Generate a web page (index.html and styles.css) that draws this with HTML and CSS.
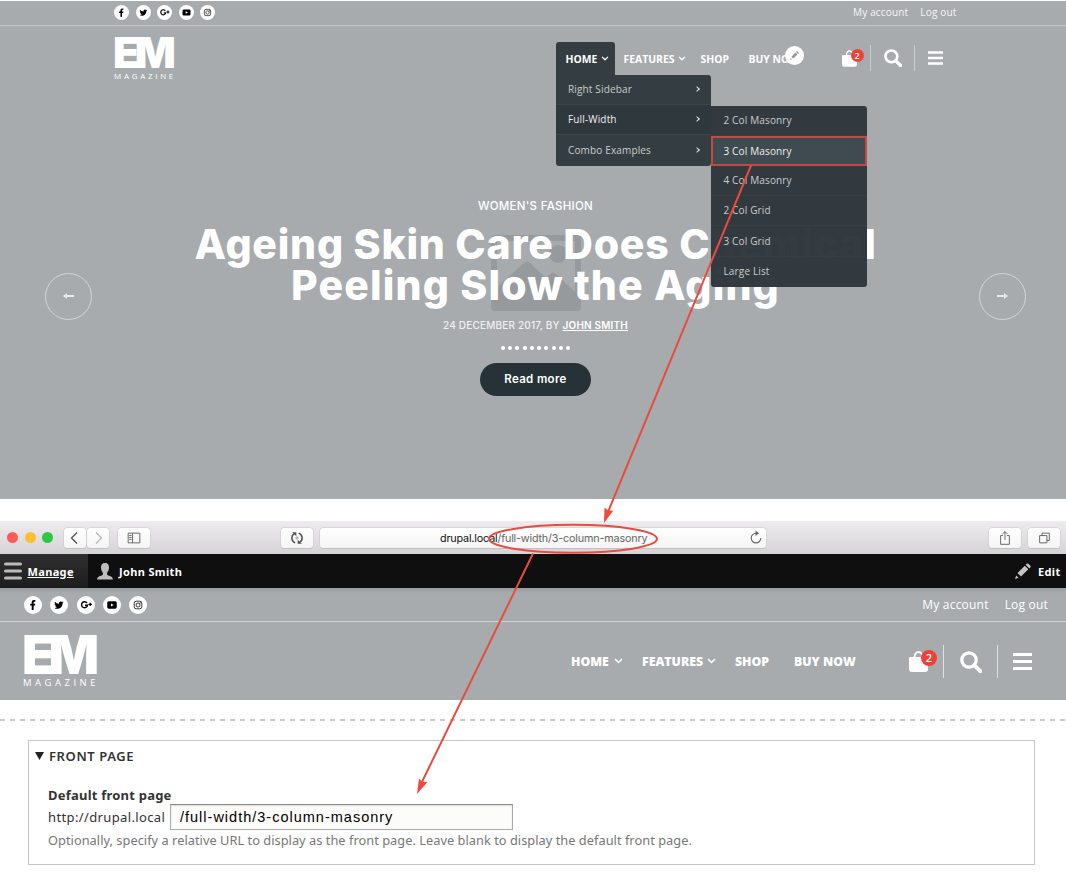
FILE: index.html
```html
<!DOCTYPE html>
<html lang="en">
<head>
<meta charset="utf-8">
<title>EM Magazine</title>
<link rel="stylesheet" href="styles.css">
</head>
<body>
<svg class="defs" aria-hidden="true">
  <symbol id="fb" viewBox="0 0 18 18"><path d="M7.7 14V9.6H6.2V7.8h1.5V6.5C7.700 4.900 8.600 4.100 10 4.100h1.300v1.700h-.9c-.6 0-.8.3-.8.8v1.200h1.700l-.3 1.800H9.600V14z"/></symbol>
  <symbol id="tw" viewBox="0 0 18 18"><path d="M13.500 6.200c-.3.200-.7.300-1 .3.400-.2.600-.5.800-.9-.4.200-.8.400-1.200.4a1.900 1.900 0 0 0-3.200 1.700C7.300 7.600 6 6.900 5 5.700c-.5.900-.3 2 .6 2.500-.3 0-.6-.1-.9-.2 0 .9.700 1.700 1.500 1.900-.3.100-.6.100-.8 0 .2.700.9 1.300 1.700 1.300-.8.600-1.800.9-2.800.8 3.700 2.200 8.200-.2 8.200-4.600.4-.4.800-.7 1-1.200z"/></symbol>
  <symbol id="gp" viewBox="0 0 18 18"><path d="M10 7a3 3 0 1 0 .5 2.300H8" fill="none" stroke="#000" stroke-width="1.400"/><path d="M11.500 8.400h3.400M13.200 6.700v3.400" stroke="#000" stroke-width="1.300"/></symbol>
  <symbol id="yt" viewBox="0 0 18 18"><path fill-rule="evenodd" d="M5.800 5.300h6.400q1.600 0 1.600 1.600v4.200q0 1.600-1.600 1.600H5.800q-1.600 0-1.600-1.600V6.900q0-1.600 1.600-1.600zM8 7.500v3l2.700-1.500z"/></symbol>
  <symbol id="ig" viewBox="0 0 18 18"><g fill="none" stroke="#222" stroke-width=".9"><rect x="5.200" y="5.200" width="7.600" height="7.600" rx="2"/><circle cx="9" cy="9" r="2"/></g><circle cx="11.200" cy="6.800" r=".6"/></symbol>
  <symbol id="chev" viewBox="0 0 9 6"><path d="M1 1l3.500 3.500L8 1" fill="none" stroke="currentColor" stroke-width="1.500"/></symbol>
  <symbol id="bag" viewBox="0 0 19 21"><path d="M0 7q0-1 1-1h3.500C5 2 7 0 9.500 0S14 2 14.500 6H18q1 0 1 1v11q0 3-3 3H3q-3 0-3-3zM6.500 6h6C12.300 3.500 11.300 2 9.500 2S6.700 3.500 6.500 6z" fill="#fff" fill-rule="evenodd"/></symbol>
  <symbol id="search" viewBox="0 0 22 22"><circle cx="9" cy="9" r="7.200" fill="none" stroke="#fff" stroke-width="3.200"/><path d="M14.200 14.200l6 6" stroke="#fff" stroke-width="4" stroke-linecap="round"/></symbol>
  <symbol id="burger" viewBox="0 0 19 17"><path d="M0 1.500h19M0 8.500h19M0 15.500h19" stroke="#fff" stroke-width="3"/></symbol>
  <symbol id="pencil" viewBox="0 0 16 16"><path d="M2.500 10l7.300-7.300 3.500 3.500L6 13.500zM10.700 1.800l1-1q.8-.8 1.600 0l2 2q.8.800 0 1.600l-1 1zM0 16l1.200-3.500 2.300 2.300z"/></symbol>
  <symbol id="arrow" viewBox="0 0 11 6"><path d="M3.500 3H11" stroke="#e9eaeb" stroke-width="2"/><path d="M0 3L4 0v6z" fill="#e9eaeb"/></symbol>
</svg>

<section class="hero-site">
  <div class="topbar topbar-sm">
    <div class="social">
      <span><svg><use href="#fb"/></svg></span><span><svg><use href="#tw"/></svg></span><span><svg><use href="#gp"/></svg></span><span><svg><use href="#yt"/></svg></span><span><svg><use href="#ig"/></svg></span>
    </div>
    <div class="account"><a>My account</a><a>Log out</a></div>
  </div>
  <header class="header header-sm">
    <div class="logo"><b>EM</b><i>MAGAZINE</i></div>
    <nav class="nav">
      <div class="item home">
        <span class="label">HOME</span><svg class="chev"><use href="#chev"/></svg>
        <ul class="menu">
          <li><span>Right Sidebar</span><em></em></li>
          <li class="open"><span>Full-Width</span><em></em>
            <ul class="menu submenu">
              <li><span>2 Col Masonry</span></li>
              <li class="picked"><span>3 Col Masonry</span></li>
              <li><span>4 Col Masonry</span></li>
              <li><span>2 Col Grid</span></li>
              <li><span>3 Col Grid</span></li>
              <li><span>Large List</span></li>
            </ul>
          </li>
          <li><span>Combo Examples</span><em></em></li>
        </ul>
      </div>
      <div class="item features"><span class="label">FEATURES</span><svg class="chev"><use href="#chev"/></svg></div>
      <div class="item shop"><span class="label">SHOP</span></div>
      <div class="item buy"><span class="label">BUY NOW</span><span class="edit-dot"><svg><use href="#pencil"/></svg></span></div>
    </nav>
    <div class="tools">
      <div class="cart"><svg><use href="#bag"/></svg><span class="count">2</span></div>
      <div class="find"><svg><use href="#search"/></svg></div>
      <div class="more"><svg><use href="#burger"/></svg></div>
    </div>
  </header>
  <div class="slide">
    <div class="round"><svg><use href="#arrow"/></svg></div>
    <div class="story">
      <svg class="placeholder" viewBox="0 0 90 76"><path fill="#979a9c" fill-rule="evenodd" d="M4 0h82q4 0 4 4v68q0 4-4 4H4q-4 0-4-4V4q0-4 4-4zM6 6v46l27-24q3-3 6 0l16 15 4-4q3-3 6 0l19 18V6z"/><circle cx="67" cy="19" r="9" fill="#979a9c"/></svg>
      <div class="kicker">WOMEN'S FASHION</div>
      <h1><span class="l1">Ageing Skin Care Does Chemical</span><span class="l2">Peeling Slow the Aging</span></h1>
      <div class="byline"><span>24 DECEMBER 2017, BY <u>JOHN SMITH</u></span></div>
      <div class="dots"><s></s><s></s><s></s><s></s><s></s><s></s><s></s><s></s><s></s><s></s></div>
      <div class="read">Read more</div>
    </div>
    <div class="round next"><svg><use href="#arrow"/></svg></div>
  </div>
</section>

<div class="browser">
  <div class="lights"><s class="red"></s><s class="amber"></s><s class="green"></s></div>
  <div class="btn back"><svg viewBox="0 0 22 20"><path d="M13 4.500L7.500 10l5.500 5.500" stroke="#555" stroke-width="1.400"/></svg></div>
  <div class="btn fwd"><svg viewBox="0 0 22 20"><path d="M9 4.500l5.500 5.500L9 15.500" stroke="#b5b5b5" stroke-width="1.300"/></svg></div>
  <div class="btn side"><svg viewBox="0 0 33 20"><path d="M10.500 5h12v10h-12zM15 5v10M11.500 7.500H14M11.500 9.500H14M11.500 11.500H14" stroke="#666"/></svg></div>
  <div class="btn sync"><svg viewBox="0 0 33 20"><path d="M14.600 15a5.400 5.400 0 0 1-.8-9.600M18.400 5a5.400 5.400 0 0 1 .8 9.600" stroke="#555" stroke-width="1.600"/><path d="M11.500 4h4.300v4.300zM21.500 16h-4.300v-4.300z" fill="#555"/><circle cx="16.500" cy="10" r="1.200" stroke="#888" stroke-width=".8"/></svg></div>
  <div class="btn url"><span>drupal.local<i>/full-width/3-column-masonry</i></span><svg viewBox="0 0 20 20"><path d="M10 5.300a4.800 4.800 0 1 0 4.800 4.800" stroke="#666" stroke-width="1.100"/><path d="M9.500 2.500v5.600L13 5.300z" fill="#666"/></svg></div>
  <div class="btn share"><svg viewBox="0 0 33 20"><path d="M14.500 7.500H12v9h9v-9h-2.500M16.500 12V3.500M13.800 6l2.700-2.700L19.200 6" stroke="#666"/></svg></div>
  <div class="btn tabs"><svg viewBox="0 0 33 20"><path d="M12 7.500h7.500v7.500H12zM14.500 7.500V5H22v7.500h-2.500" stroke="#666"/></svg></div>
</div>

<div class="adminbar">
  <div class="manage"><svg viewBox="0 0 18 18"><path d="M1.500 2h15M1.500 9h15M1.500 16h15" stroke="#bbb" stroke-width="3" stroke-linecap="round"/></svg><span>Manage</span></div>
  <div class="user"><svg viewBox="0 0 16 17"><path fill="#bebebe" d="M8 0c3 0 4 2 4 4.500S11 8 10.300 9.500c-.6 1.500-.3 2.500 1 3 2 .7 4.200 1 4.700 4H0c.5-3 2.700-3.300 4.700-4 1.300-.5 1.600-1.500 1-3C5 8 4 7 4 4.500S5 0 8 0z"/></svg><span>John Smith</span></div>
  <div class="edit"><svg><use href="#pencil"/></svg><span>Edit</span></div>
</div>

<section class="site-two">
  <div class="topbar topbar-lg">
    <div class="social">
      <span><svg><use href="#fb"/></svg></span><span><svg><use href="#tw"/></svg></span><span><svg><use href="#gp"/></svg></span><span><svg><use href="#yt"/></svg></span><span><svg><use href="#ig"/></svg></span>
    </div>
    <div class="account"><a>My account</a><a>Log out</a></div>
  </div>
  <header class="header header-lg">
    <div class="logo"><b>EM</b><i>MAGAZINE</i></div>
    <nav class="nav">
      <div class="item home"><span class="label">HOME</span><svg class="chev"><use href="#chev"/></svg></div>
      <div class="item features"><span class="label">FEATURES</span><svg class="chev"><use href="#chev"/></svg></div>
      <div class="item shop"><span class="label">SHOP</span></div>
      <div class="item buy"><span class="label">BUY NOW</span></div>
    </nav>
    <div class="tools">
      <div class="cart"><svg><use href="#bag"/></svg><span class="count">2</span></div>
      <div class="find"><svg><use href="#search"/></svg></div>
      <div class="more"><svg><use href="#burger"/></svg></div>
    </div>
  </header>
</section>

<div class="divider"></div>

<section class="settings">
  <h2><svg viewBox="0 0 9 8"><path d="M0 0h9L4.500 8z" fill="#222"/></svg><span>FRONT PAGE</span></h2>
  <div class="field-name"><span>Default front page</span></div>
  <div class="field"><span class="base">http://drupal.local</span><div class="input"><span>/full-width/3-column-masonry</span></div></div>
  <p class="help"><span>Optionally, specify a relative URL to display as the front page. Leave blank to display the default front page.</span></p>
</section>

<svg class="notes" viewBox="0 0 1066 887">
  <g fill="none" stroke="#e74c3f" stroke-width="2">
    <path d="M751 165.500L608 512M533 553.500L421 784"/>
    <ellipse cx="573" cy="538.800" rx="84" ry="14"/>
  </g>
  <path fill="#ef4a3c" d="M604 523l.5-15.500 3.700 3 5 .2zM417 794l2-15.500 3 3.200 5.500.3z"/>
</svg>
</body>
</html>
```
FILE: styles.css
```css
* { box-sizing: border-box; }
body { margin: 0; width: 1066px; height: 887px; position: relative; overflow: hidden; background: #fff; font-family: "Open Sans", sans-serif; }
.defs { position: absolute; width: 0; height: 0; }
ul { list-style: none; margin: 0; padding: 0; }
svg { display: block; flex: none; }
span, a { white-space: nowrap; }
s { text-decoration: none; display: block; border-radius: 50%; }

.hero-site { height: 499px; border-top: 1px solid #fff; background: #a7abad; }
.topbar { display: flex; justify-content: space-between; align-items: center; border-bottom: 1px solid #c3c6c7; color: #fff; }
.topbar-sm { height: 25px; padding: 0 109.500px 1px 114px; }
.topbar-lg { height: 34px; padding: 0 18px 0 24px; border-color: #cfd1d2; }
.social { display: flex; }
.social span { background: #fff; border-radius: 50%; }
.social svg { width: 100%; height: 100%; }
.topbar-sm .social { gap: 6.600px; }
.topbar-sm .social span { width: 15px; height: 15px; }
.topbar-lg .social { gap: 8.300px; }
.topbar-lg .social span { width: 18px; height: 18px; }
.account { display: flex; }
.topbar-sm .account { font-size: 10px; line-height: 14px; gap: 12px; letter-spacing: .17px; opacity: .9; padding-bottom: 1px; }
.topbar-lg .account { font-size: 12px; gap: 16px; letter-spacing: .2px; }

.header { display: flex; color: #fff; }
.logo { flex: none; display: flex; flex-direction: column; }
.logo b { font: 900 43px/32px Inter, sans-serif; letter-spacing: -4.500px; }
.logo i { font: normal 8px/8px "Open Sans", sans-serif; letter-spacing: 2.700px; }
.header-sm { height: 69px; }
.header-sm .logo { width: 555.500px; padding: 10px 0 0 113px; }
.header-sm .logo i { margin-top: 4px; padding-left: 1px; }
.header-lg { height: 78px; }
.header-lg .logo { width: 571px; padding: 14px 0 0 22px; }
.header-lg .logo b { font-size: 53px; line-height: 39px; letter-spacing: -6px; }
.header-lg .logo i { font-size: 9.500px; line-height: 9px; letter-spacing: 3.500px; margin-top: 3px; padding-left: 1px; }

.nav { display: flex; font-weight: 700; }
.item { position: relative; display: flex; align-items: center; }
.label { flex: none; }
.header-sm .nav { font-size: 10.400px; height: 33px; margin-top: 16px; }
.header-sm .home { width: 59px; padding-left: 10px; background: #343e42; border-radius: 3px 3px 0 0; }
.header-sm .home .label { width: 35px; }
.header-sm .features { width: 77px; padding-left: 9px; }
.header-sm .features .label { width: 54px; }
.header-sm .shop { width: 57px; padding-left: 9px; }
.header-sm .buy { width: 93px; }
.header-sm .chev { width: 8px; height: 5px; }
.header-lg .nav { font-size: 12.300px; height: 78px; font-weight: 800; }
.header-lg .home { width: 71px; }
.header-lg .home .label { width: 43px; }
.header-lg .features { width: 93px; }
.header-lg .features .label { width: 65px; }
.header-lg .shop { width: 59px; }
.header-lg .buy { width: 115px; }
.header-lg .chev { width: 9px; height: 6px; }
.edit-dot { position: absolute; left: 36px; top: 4px; width: 19px; height: 19px; border-radius: 50%; background: #fff; padding: 5px; fill: #999; }
.edit-dot svg { width: 9px; height: 9px; }

.menu { position: absolute; left: 0; top: 33px; width: 155px; z-index: 3; background: #343e42; border-radius: 0 3px 3px 3px; font-size: 10px; font-weight: 400; letter-spacing: .15px; color: #c9cccd; }
.menu li { position: relative; height: 30.200px; display: flex; align-items: center; justify-content: space-between; padding: 0 12px .8px 12.500px; border-bottom: 1px solid #3b454a; }
.menu li:last-child { border-bottom: 0; }
.menu li.open { background: #2f383d; color: #f0f1f1; }
.menu em { width: 4px; height: 4px; border: solid #e4e6e6; border-width: 1px 1px 0 0; transform: rotate(45deg); }
.submenu { left: 155.500px; top: .5px; width: 155.500px; background: rgba(46, 54, 59, .97); }
.submenu li { border-color: #363f44; }
.submenu .picked { background: #3f4b50; border: 2px solid #c24a43; padding: 0 10px .8px 10.500px; color: #eee; }

.tools { display: flex; }
.tools > div { position: relative; display: flex; align-items: center; }
.count { position: absolute; border-radius: 50%; background: #ef4136; font-weight: 600; text-align: center; }
.header-sm .tools { height: 26px; margin-top: 19px; }
.header-sm .cart { width: 29px; border-right: 1px solid #c9cccd; }
.header-sm .cart svg { width: 15px; height: 17px; }
.header-sm .count { width: 13px; height: 13px; font-size: 9px; line-height: 13px; left: 9px; top: 4px; }
.header-sm .find { width: 44px; padding-left: 13px; border-right: 1px solid #c9cccd; }
.header-sm .find svg { width: 18px; height: 18px; }
.header-sm .more { padding-left: 13px; }
.header-sm .more svg { width: 15px; height: 14px; }
.header-lg .tools { height: 33px; margin-top: 23px; }
.header-lg .cart { width: 35px; border-right: 1px solid #dfe1e1; }
.header-lg .cart svg { width: 19px; height: 21px; }
.header-lg .count { width: 16px; height: 16px; font-size: 11px; line-height: 16px; left: 12px; top: 5px; }
.header-lg .find { width: 54px; padding-left: 16px; border-right: 1px solid #dfe1e1; }
.header-lg .find svg { width: 22px; height: 22px; }
.header-lg .more { padding-left: 15px; }
.header-lg .more svg { width: 19px; height: 17px; }

.slide { display: flex; justify-content: space-between; padding: 102px 40px 0 45px; font-family: Inter, sans-serif; color: #fff; }
.round { margin-top: 75.500px; width: 47px; height: 47px; border: 1px solid #d3d5d6; border-radius: 50%; display: flex; align-items: center; justify-content: center; }
.round svg { width: 11px; height: 6px; }
.next svg { transform: scaleX(-1); }
.story { position: relative; width: 700px; text-align: center; display: flex; flex-direction: column; align-items: center; }
.placeholder { position: absolute; left: 305px; top: 38px; width: 90px; height: 76px; }
.kicker { position: relative; font-size: 11.500px; font-weight: 500; line-height: 16px; letter-spacing: .27px; margin-top: 1px; }
h1 { position: relative; margin: 10px 0 0; font-size: 41px; font-weight: 800; line-height: 41px; white-space: nowrap; }
h1 span { display: block; }
.l1 { letter-spacing: .75px; }
.l2 { letter-spacing: 1.150px; }
.byline { position: relative; font-size: 10px; font-weight: 500; line-height: 14px; margin-top: 12px; color: #eff0f0; letter-spacing: .18px; }
.byline u { font-weight: 600; color: #fff; }
.dots { display: flex; gap: 3.300px; margin-top: 14px; }
.dots s { width: 4px; height: 4px; background: #fff; }
.read { margin-top: 13px; width: 111px; height: 33px; border-radius: 17px; background: #263238; font-size: 11.500px; font-weight: 600; line-height: 32px; letter-spacing: .35px; }

.browser { margin-top: 22px; height: 33px; background: linear-gradient(#eeecef, #d5d3d6); display: flex; padding-top: 7px; }
.lights { display: flex; gap: 6.500px; width: 64px; padding: 3.500px 0 0 7.200px; }
.lights s { width: 11px; height: 11px; }
.red { background: #fc5b57; }
.amber { background: #fdbe2f; }
.green { background: #2bc840; }
.btn { height: 20px; background: linear-gradient(#fff, #f5f5f5); border-radius: 3.500px; box-shadow: 0 0 0 .5px #c9c7ca, 0 1px 0 #bbb; }
.btn svg { fill: none; height: 20px; width: 100%; }
.back, .fwd { width: 22px; }
.fwd { margin-left: 1px; }
.side { width: 32px; margin-left: 9px; }
.sync { width: 32px; margin-left: 131px; }
.url { width: 446px; margin-left: 7px; display: flex; align-items: center; justify-content: space-between; padding-left: 120px; font: 10.800px Inter, sans-serif; letter-spacing: -.180px; color: #111; }
.url i { font-style: normal; color: #666; }
.url svg { width: 20px; }
.share { width: 32px; margin-left: 223px; }
.tabs { width: 32px; margin-left: 7px; }

.adminbar { height: 34px; background: #0f0f0f; color: #fff; display: flex; font: 700 11px "Noto Sans", sans-serif; letter-spacing: .35px; }
.adminbar > div { display: flex; align-items: center; }
.manage { width: 88px; background: linear-gradient(#2f2f2f, #1d1d1d); padding-left: 4px; gap: 5.500px; text-decoration: underline; }
.manage svg { width: 18px; height: 18px; }
.user { padding-left: 9px; gap: 6px; width: 927px; }
.user svg { width: 16px; height: 17px; }
.edit { gap: 7px; }
.edit svg { width: 16px; height: 16px; fill: #c4c4c4; }

.site-two { height: 112px; background: linear-gradient(#999da0, #a7abad 5px); }

.divider { height: 2px; margin-top: 19px; background: repeating-linear-gradient(90deg, #ccc 0 5px, #fff 5px 10px); }
.settings { margin: 19px 31px 0 28px; height: 125px; border: 1px solid #c6c6c6; font-family: "Noto Sans", sans-serif; color: #333; }
h2 { margin: 6px 0 0 6px; display: flex; align-items: center; gap: 5px; height: 18px; font-size: 13px; font-weight: 600; letter-spacing: .6px; }
h2 svg { width: 9px; height: 8px; }
.field-name { margin: 21px 0 0 19px; height: 18px; font-size: 13px; line-height: 18px; font-weight: 700; letter-spacing: .22px; }
.field { margin-left: 19px; display: flex; align-items: center; font-size: 13px; }
.base { width: 122px; letter-spacing: .37px; }
.input { width: 343px; height: 26px; border: 1px solid #aaa; border-top-color: #888; background: #fcfcfa; box-shadow: inset 0 1px 2px #ddd; padding-left: 9px; font: 14.500px/24px "Liberation Sans", sans-serif; color: #000; letter-spacing: 1px; }
.help { margin: 1px 0 0 19px; font-size: 12.800px; line-height: 18px; color: #777; letter-spacing: .03px; }

.notes { position: absolute; left: 0; top: 0; width: 1066px; height: 887px; z-index: 5; pointer-events: none; }
```
